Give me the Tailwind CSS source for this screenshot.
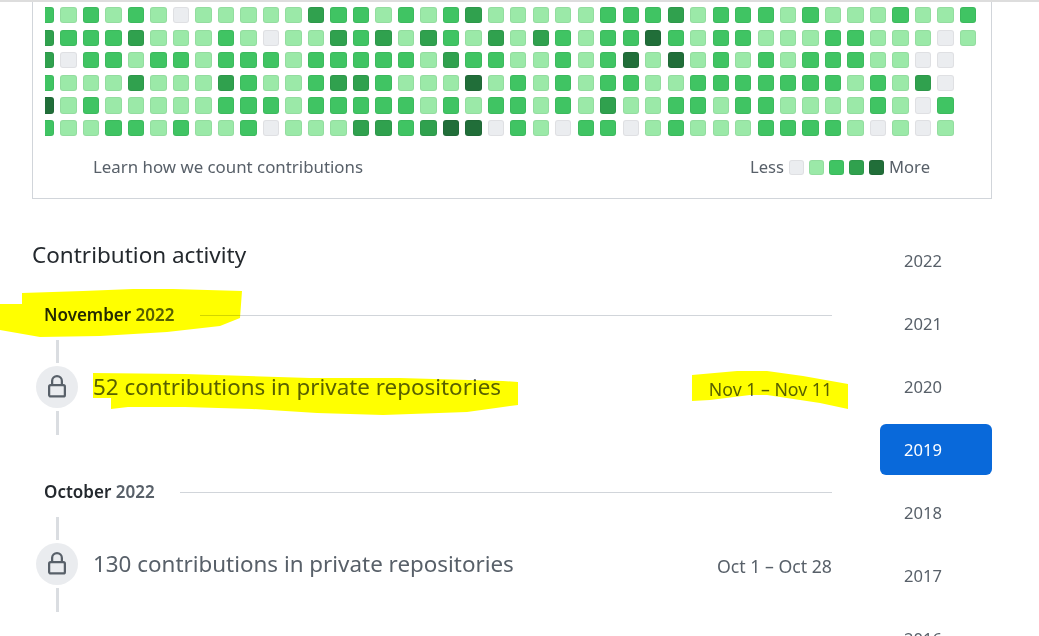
<!DOCTYPE html>
<html lang="en">
<head>
  <meta charset="UTF-8" />
  <title>Contribution activity</title>
  <script src="https://cdn.jsdelivr.net/npm/@tailwindcss/browser@4"></script>
</head>
<body class="bg-white h-[636px] overflow-hidden relative font-['Noto_Sans',sans-serif] text-[#586069]">

  <div class="h-[2px] bg-[#dddddd]"></div>

  <!-- calendar box, top is scrolled away -->
  <div class="ml-[32px] w-[960px] h-[197px] border border-t-0 border-[#d1d5da] flex flex-col">
    <div class="ml-[12px] mt-[5px] overflow-hidden w-[932px] h-[132px]">
      <div id="graph" class="grid grid-cols-[repeat(42,16.3px)] auto-rows-[16.3px] gap-x-[6.2px] gap-y-[6.3px] ml-[-7px]"></div>
    </div>
    <div class="flex items-center mt-[13px] pl-[60px] pr-[61px] h-[30px] text-[16.6px]">
      <span class="text-[16.85px]">Learn how we count contributions</span>
      <span class="ml-auto mr-[5px]">Less</span>
      <div class="flex gap-[5px]">
        <div class="w-[15px] h-[15px] rounded-[3px] bg-[#ebedf0] border border-black/5"></div>
        <div class="w-[15px] h-[15px] rounded-[3px] bg-[#9be9a8] border border-black/5"></div>
        <div class="w-[15px] h-[15px] rounded-[3px] bg-[#40c463] border border-black/5"></div>
        <div class="w-[15px] h-[15px] rounded-[3px] bg-[#30a14e] border border-black/5"></div>
        <div class="w-[15px] h-[15px] rounded-[3px] bg-[#216e39] border border-black/5"></div>
      </div>
      <span class="ml-[5px]">More</span>
    </div>
  </div>

  <div class="flex ml-[32px] w-[960px]">
    <!-- activity -->
    <div class="w-[800px]">
      <h2 class="mt-[41px] text-[22.5px] leading-[30px] text-[#24292e]">Contribution activity</h2>

      <div class="mt-[30px] ml-[12px] flex items-center h-[30px] text-[17px]">
        <span class="font-semibold text-[#24292e]">November <span class="text-[#586069]">2022</span></span>
        <div class="ml-[25px] flex-1 h-px bg-[#d1d5da]"></div>
      </div>
      <div class="ml-[4px] h-[120px] flex">
        <div class="w-[42px] flex flex-col items-center mt-[10px]">
          <div class="w-[3px] h-[23px] bg-[#d1d5da]/80"></div>
          <div class="my-[3px] w-[42px] h-[42px] rounded-full bg-[#eaecef] flex items-center justify-center">
            <svg class="w-[24px] h-[24px] text-[#586069]" viewBox="0 0 16 16" fill="currentColor"><path fill-rule="evenodd" d="M4 4v2h-.25A1.75 1.75 0 002 7.75v5.5c0 .966.784 1.75 1.75 1.75h8.5A1.75 1.75 0 0014 13.25v-5.5A1.75 1.75 0 0012.25 6H12V4a4 4 0 10-8 0zm6.5 2V4a2.5 2.5 0 00-5 0v2h5zM3.75 7.5a.25.25 0 00-.25.25v5.5c0 .138.112.25.25.25h8.5a.25.25 0 00.25-.25v-5.5a.25.25 0 00-.25-.25h-8.5z"/></svg>
          </div>
          <div class="w-[3px] h-[24px] bg-[#d1d5da]/80"></div>
        </div>
        <div class="ml-[15px] flex-1 flex items-start justify-between pt-[39px]">
          <span class="text-[22.4px] leading-[36px]">52 contributions in private repositories</span>
          <span class="text-[17.7px] leading-[36px] pt-[2px]">Nov 1 – Nov 11</span>
        </div>
      </div>

      <div class="mt-[27px] ml-[12px] flex items-center h-[30px] text-[17px]">
        <span class="font-semibold text-[#24292e]">October <span class="text-[#586069]">2022</span></span>
        <div class="ml-[25px] flex-1 h-px bg-[#d1d5da]"></div>
      </div>
      <div class="ml-[4px] h-[120px] flex">
        <div class="w-[42px] flex flex-col items-center mt-[10px]">
          <div class="w-[3px] h-[23px] bg-[#d1d5da]/80"></div>
          <div class="my-[3px] w-[42px] h-[42px] rounded-full bg-[#eaecef] flex items-center justify-center">
            <svg class="w-[24px] h-[24px] text-[#586069]" viewBox="0 0 16 16" fill="currentColor"><path fill-rule="evenodd" d="M4 4v2h-.25A1.75 1.75 0 002 7.75v5.5c0 .966.784 1.75 1.75 1.75h8.5A1.75 1.75 0 0014 13.25v-5.5A1.75 1.75 0 0012.25 6H12V4a4 4 0 10-8 0zm6.5 2V4a2.5 2.5 0 00-5 0v2h5zM3.75 7.5a.25.25 0 00-.25.25v5.5c0 .138.112.25.25.25h8.5a.25.25 0 00.25-.25v-5.5a.25.25 0 00-.25-.25h-8.5z"/></svg>
          </div>
          <div class="w-[3px] h-[24px] bg-[#d1d5da]/80"></div>
        </div>
        <div class="ml-[15px] flex-1 flex items-start justify-between pt-[39px]">
          <span class="text-[22.4px] leading-[36px]">130 contributions in private repositories</span>
          <span class="text-[17.7px] leading-[36px] pt-[2px]">Oct 1 – Oct 28</span>
        </div>
      </div>
    </div>

    <!-- year list -->
    <div class="ml-[48px] w-[112px] mt-[36px] flex flex-col gap-[12px] text-[16.6px]">
      <a class="h-[51px] pl-[24px] pt-[2px] flex items-center rounded-md">2022</a>
      <a class="h-[51px] pl-[24px] pt-[2px] flex items-center rounded-md">2021</a>
      <a class="h-[51px] pl-[24px] pt-[2px] flex items-center rounded-md">2020</a>
      <a class="h-[51px] pl-[24px] pt-[2px] flex items-center rounded-md bg-[#0969da] text-white">2019</a>
      <a class="h-[51px] pl-[24px] pt-[2px] flex items-center rounded-md">2018</a>
      <a class="h-[51px] pl-[24px] pt-[2px] flex items-center rounded-md">2017</a>
      <a class="h-[51px] pl-[24px] pt-[2px] flex items-center rounded-md">2016</a>
    </div>
  </div>

  <!-- yellow marker scribbles on top of the page -->
  <svg class="absolute left-0 top-0 w-[1039px] h-[636px] mix-blend-multiply pointer-events-none" viewBox="0 0 1039 636" fill="#ffff00">
    <path d="M0 304 L22 304 L22 293 L83 291 L133 289 L173 289 L242 291 L240 318 L220 326 L167 332 L100 336 L40 337 L0 330 Z"/>
    <path d="M93 373 L185 374 L310 378 L400 378 L503 381 L518 382 L518 405 L503 407 L467 412 L383 415 L317 413 L252 409 L185 407 L128 407 L111 409 L111 398 L93 398 Z"/>
    <path d="M692 375 L737 371 L767 371 L803 376 L848 384 L848 409 L820 403 L767 395 L750 395 L710 400 L692 401 Z"/>
  </svg>

  <script>
    const LEVELS = [
      "bg-[#ebedf0]",
      "bg-[#9be9a8]",
      "bg-[#40c463]",
      "bg-[#30a14e]",
      "bg-[#216e39]",
    ];
    // one string per weekday, one digit per week (level 0-4), "." means no cell
    const DATA = [
      "212121011111322121231111122231222121112112",
      "322231112101132313213132122421221112211101",
      "30221221222122222132211212414121212221100.",
      "21113111321123321114121212211222222212130.",
      "41211111222122222121221213112212211112102.",
      "21122121120111332344021022012111222210101.",
    ];
    const graph = document.getElementById("graph");
    DATA.forEach((row) => {
      for (let i = 0; i < 42; i++) {
        const cell = document.createElement("div");
        if (row[i] !== ".") {
          cell.className = "rounded-[3px] border border-black/5 " + LEVELS[Number(row[i])];
        }
        graph.appendChild(cell);
      }
    });
  </script>
</body>
</html>
